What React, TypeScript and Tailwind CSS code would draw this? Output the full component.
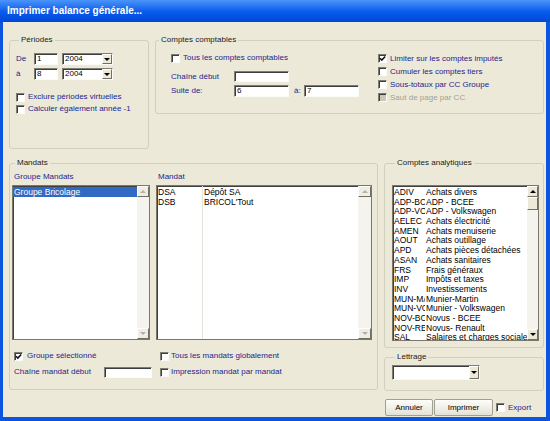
import React from "react";

const label = "text-[#1e1e8c]";
const sunken =
  "border border-t-[#7f7d72] border-l-[#7f7d72] border-r-[#fbfbf8] border-b-[#fbfbf8] shadow-[inset_1px_1px_0_#3c3c3c]";
const raised =
  "border border-t-white border-l-white border-r-[#716f64] border-b-[#716f64] bg-[#ece9d8]";

function Group({ title, className = "", children }: { title: string; className?: string; children?: React.ReactNode }) {
  return (
    <fieldset className={`m-0 p-0 min-w-0 shrink-0 border border-[#d0d0bf] rounded-[3px] ${className}`}>
      <legend className="ml-[3px] px-[2px] text-[8px] leading-[10px] text-[#1a1a1a]">{title}</legend>
      {children}
    </fieldset>
  );
}

function Check({ checked = false, disabled = false }: { checked?: boolean; disabled?: boolean }) {
  return (
    <span
      className={`relative block h-[9px] w-[9px] shrink-0 ${sunken} ${disabled ? "bg-[#c9c7bc]" : "bg-white"}`}
    >
      {checked && (
        <svg viewBox="0 0 7 7" className="absolute left-0 top-0 h-[7px] w-[7px]">
          <path d="M1 3.3 L2.8 5.1 L6.2 1.4" stroke="#111" strokeWidth="1.5" fill="none" />
        </svg>
      )}
    </span>
  );
}

function CheckRow({
  text,
  checked,
  disabled,
  gap = "gap-[3px]",
  className = "",
}: {
  text: string;
  checked?: boolean;
  disabled?: boolean;
  gap?: string;
  className?: string;
}) {
  return (
    <div className={`flex items-center h-[10px] ${gap} ${className}`}>
      <Check checked={checked} disabled={disabled} />
      <span className={`text-[8px] leading-[10px] whitespace-nowrap ${disabled ? "text-[#a3a192]" : label}`}>{text}</span>
    </div>
  );
}

function Input({ value = "", className = "" }: { value?: string; className?: string }) {
  return (
    <div className={`bg-white pl-[2px] text-[8px] leading-[10px] text-black flex items-center ${sunken} ${className}`}>
      {value}
    </div>
  );
}

function Triangle({ up = false, color = "#000" }: { up?: boolean; color?: string }) {
  return (
    <svg viewBox="0 0 6 3" className="h-[3px] w-[6px]">
      <path d={up ? "M0 3 L3 0 L6 3Z" : "M0 0 L6 0 L3 3Z"} fill={color} />
    </svg>
  );
}

function Combo({ value = "", className = "" }: { value?: string; className?: string }) {
  return (
    <div className={`flex bg-white ${sunken} ${className}`}>
      <span className="flex-1 pl-[2px] text-[8px] leading-[10px] text-black self-center">{value}</span>
      <span className={`flex w-[10px] items-center justify-center ${raised}`}>
        <Triangle />
      </span>
    </div>
  );
}

function ArrowBtn({ up = false, enabled = false }: { up?: boolean; enabled?: boolean }) {
  return (
    <div className={`flex h-[11px] shrink-0 items-center justify-center ${raised} ${enabled ? "" : "bg-[#efede4]"}`}>
      <Triangle up={up} color={enabled ? "#000" : "#b4b2a5"} />
    </div>
  );
}

function ScrollBar({ enabled = false, className = "w-[12px]" }: { enabled?: boolean; className?: string }) {
  return (
    <div className={`flex shrink-0 flex-col bg-[#f4f3ee] ${className}`}>
      <ArrowBtn up enabled={enabled} />
      <div className="flex-1">{enabled && <div className={`h-[13px] ${raised}`} />}</div>
      <ArrowBtn enabled={enabled} />
    </div>
  );
}

const listBox = "flex bg-white border border-[#7a786d] shadow-[inset_1px_1px_0_#404040] overflow-hidden";

const analytiques: [string, string][] = [
  ["ADIV", "Achats divers"],
  ["ADP-BC", "ADP - BCEE"],
  ["ADP-VO", "ADP - Volkswagen"],
  ["AELEC", "Achats électricité"],
  ["AMEN", "Achats menuiserie"],
  ["AOUT", "Achats outillage"],
  ["APD", "Achats pièces détachées"],
  ["ASAN", "Achats sanitaires"],
  ["FRS", "Frais généraux"],
  ["IMP", "Impôts et taxes"],
  ["INV", "Investissements"],
  ["MUN-MA", "Munier-Martin"],
  ["MUN-VO", "Munier - Volkswagen"],
  ["NOV-BC", "Novus - BCEE"],
  ["NOV-RE", "Novus- Renault"],
  ["SAL", "Salaires et charges sociales"],
];

const mandats: [string, string][] = [
  ["DSA", "Dépôt SA"],
  ["DSB", "BRICOL'Tout"],
];

export default function App() {
  return (
    <div className="flex h-[421px] w-[550px] flex-col overflow-hidden bg-[#0a54e0] font-['Liberation_Sans',Arial,sans-serif]">
      {/* title bar */}
      <div className="flex h-[22px] shrink-0 items-center bg-gradient-to-b from-[#4a94fa] via-[#0a5ded] to-[#0047d6] pl-[7px]">
        <span className="text-[10px] font-bold leading-[12px] text-white">Imprimer balance générale...</span>
      </div>

      <div className="ml-[3px] mr-[4px] mb-[4px] flex flex-1 flex-col bg-[#ece9d8] pl-[6px] pr-[2px] pt-[13px]">
        {/* top row */}
        <div className="flex items-start gap-[6px]">
          <Group title="Périodes" className="w-[140px] h-[114px] pl-[6px]">
            <div className="mt-[8px] flex h-[12px] items-center">
              <span className={`w-[18px] text-[8px] leading-[10px] ${label}`}>De</span>
              <Input value="1" className="h-[12px] w-[24px]" />
              <Combo value="2004" className="ml-[4px] h-[12px] w-[51px]" />
            </div>
            <div className="mt-[3px] flex h-[12px] items-center">
              <span className={`w-[18px] text-[8px] leading-[10px] ${label}`}>à</span>
              <Input value="8" className="h-[12px] w-[24px]" />
              <Combo value="2004" className="ml-[4px] h-[12px] w-[51px]" />
            </div>
            <CheckRow text="Exclure périodes virtuelles" className="mt-[12px]" />
            <CheckRow text="Calculer également année -1" className="mt-[2px]" />
          </Group>

          <Group title="Comptes comptables" className="flex-1 h-[79px]">
            <div className="flex">
              <div className="w-[222px] shrink-0 pl-[15px]">
                <CheckRow text="Tous les comptes comptables" className="mt-[8px]" />
                <div className="mt-[8px] flex h-[11px] items-center">
                  <span className={`w-[63px] text-[8px] leading-[10px] ${label}`}>Chaîne début</span>
                  <Input className="h-[11px] w-[55px]" />
                </div>
                <div className="mt-[3px] flex h-[12px] items-center">
                  <span className={`w-[63px] text-[8px] leading-[10px] ${label}`}>Suite de:</span>
                  <Input value="6" className="h-[12px] w-[55px]" />
                  <span className={`ml-[5px] w-[10px] text-[8px] leading-[10px] ${label}`}>à:</span>
                  <Input value="7" className="h-[12px] w-[55px]" />
                </div>
              </div>
              <div className="flex flex-col pt-[7px]">
                <div className="flex h-[13px] items-center">
                  <CheckRow text="Limiter sur les comptes imputés" checked />
                </div>
                <div className="flex h-[13px] items-center">
                  <CheckRow text="Cumuler les comptes tiers" />
                </div>
                <div className="flex h-[13px] items-center">
                  <CheckRow text="Sous-totaux par CC Groupe" />
                </div>
                <div className="flex h-[13px] items-center">
                  <CheckRow text="Saut de page par CC" disabled />
                </div>
              </div>
            </div>
          </Group>
        </div>

        {/* middle row */}
        <div className="mt-[9px] flex items-start gap-[6px]">
          <Group title="Mandats" className="w-[369px] h-[232px] pl-[2px]">
            <div className="mt-[4px] grid grid-cols-[138px_216px] gap-x-[6px]">
              <span className={`pl-[2px] text-[8px] leading-[10px] ${label}`}>Groupe Mandats</span>
              <span className={`pl-[2px] text-[8px] leading-[10px] ${label}`}>Mandat</span>
            </div>
            <div className="mt-[3px] grid h-[155px] grid-cols-[138px_216px] gap-x-[6px]">
              <div className={listBox}>
                <div className="flex-1 pt-[1px]">
                  <div className="h-[10px] bg-[#316ac5] pl-[1px] text-[8.5px] leading-[10px] text-white">Groupe Bricolage</div>
                </div>
                <ScrollBar />
              </div>
              <div className={listBox}>
                <div className="flex flex-1">
                  <div className="w-[46px] shrink-0 border-r border-[#e4e3dc] pl-[1px] pt-[1px]">
                    {mandats.map(([c]) => (
                      <div key={c} className="h-[10px] text-[8.5px] leading-[10px] text-black">{c}</div>
                    ))}
                  </div>
                  <div className="flex-1 pl-[1px] pt-[1px]">
                    {mandats.map(([c, d]) => (
                      <div key={c} className="h-[10px] text-[8.5px] leading-[10px] text-black">{d}</div>
                    ))}
                  </div>
                </div>
                <ScrollBar className="w-[13px]" />
              </div>
            </div>
            <div className="mt-[11px] grid grid-cols-[138px_216px] gap-x-[6px]">
              <CheckRow text="Groupe sélectionné" checked gap="gap-[4px]" className="pl-[2px]" />
              <CheckRow text="Tous les mandats globalement" gap="gap-[2px]" className="pl-[4px]" />
            </div>
            <div className="mt-[5px] grid h-[12px] grid-cols-[138px_216px] gap-x-[6px]">
              <div className="flex items-center pl-[2px]">
                <span className={`w-[90px] shrink-0 text-[8px] leading-[10px] ${label}`}>Chaîne mandat début</span>
                <Input className="h-[11px] w-[48px] shrink-0" />
              </div>
              <div className="flex items-center">
                <CheckRow text="Impression mandat par mandat" gap="gap-[2px]" className="pl-[4px]" />
              </div>
            </div>
          </Group>

          <div className="flex flex-1 flex-col">
            <Group title="Comptes analytiques" className="h-[190px] pl-[7px]">
              <div className={`mt-[17px] h-[156px] w-[147px] ${listBox}`}>
                <div className="flex-1 overflow-hidden pl-[1px] pt-[1px]">
                  {analytiques.map(([c, d]) => (
                    <div key={c} className="flex h-[9.7px] text-[8.5px] leading-[10px] text-black whitespace-nowrap">
                      <span className="w-[31px] shrink-0 overflow-hidden">{c}</span>
                      <span className="pl-[1px]">{d}</span>
                    </div>
                  ))}
                </div>
                <ScrollBar enabled className="w-[11px]" />
              </div>
            </Group>
            <Group title="Lettrage" className="mt-[4px] h-[39px] pl-[7px]">
              <Combo className="mt-[3px] h-[15px] w-[88px]" />
            </Group>
          </div>
        </div>

        {/* buttons */}
        <div className="mt-[8px] flex h-[17px] items-center pl-[376px]">
          <button className="h-[17px] w-[48px] rounded-[2px] border border-[#a19f92] bg-gradient-to-b from-[#fdfdfb] to-[#e4e2d6] text-[8px] leading-[10px] text-black">
            Annuler
          </button>
          <button className="ml-[1px] h-[17px] w-[59px] rounded-[2px] border border-[#a19f92] bg-gradient-to-b from-[#fdfdfb] to-[#e4e2d6] text-[8px] leading-[10px] text-black">
            Imprimer
          </button>
          <CheckRow text="Export" className="ml-[3px]" />
        </div>
      </div>
    </div>
  );
}
